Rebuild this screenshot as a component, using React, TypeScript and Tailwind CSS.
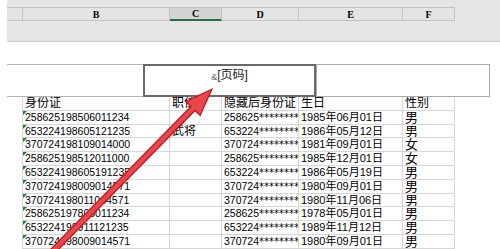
import React from 'react';

const rows = [
  ['258625198506011234', '', '258625', '1985年06月01日', '男'],
  ['653224198605121235', '武将', '653224', '1986年05月12日', '男'],
  ['370724198109014000', '', '370724', '1981年09月01日', '女'],
  ['258625198512011000', '', '258625', '1985年12月01日', '女'],
  ['653224198605191235', '', '653224', '1986年05月19日', '男'],
  ['370724198009014571', '', '370724', '1980年09月01日', '男'],
  ['370724198011064571', '', '370724', '1980年11月06日', '男'],
  ['258625197805011234', '', '258625', '1978年05月01日', '男'],
  ['653224198911121235', '', '653224', '1989年11月12日', '男'],
  ['370724198009014571', '', '370724', '1980年09月01日', '男'],
];

const cols = [
  { name: '', w: 'w-[16px]' },
  { name: 'B', w: 'w-[147px]' },
  { name: 'C', w: 'w-[52px]' },
  { name: 'D', w: 'w-[77px]' },
  { name: 'E', w: 'w-[104px]' },
  { name: 'F', w: 'w-[52px]' },
];

const cell = 'h-full border-r border-[#d6d6d6] overflow-hidden whitespace-nowrap pl-[2px]';

const App: React.FC = () => {
  return (
    <div className="relative w-[500px] h-[249px] overflow-hidden bg-white text-black font-['Liberation_Sans','Noto_Sans_CJK_SC',sans-serif]">
      {/* column header band */}
      <div className="ml-[7px] h-[42px] bg-[#e6e6e6] border-b border-[#cdcdcd] pt-[7px]">
        <div className="flex h-[14px]">
          {cols.map((c) => (
            <div
              key={c.name || 'corner'}
              className={`${c.w} h-full flex items-center justify-center border-t border-b border-r border-[#c2c2c2] text-[10px] font-bold font-['Liberation_Serif',serif] ${
                c.name === 'C' ? 'bg-[#d4d4d4] border-b-2 border-b-[#217346]' : 'bg-[#e4e4e4]'
              }`}
            >
              {c.name}
            </div>
          ))}
        </div>
      </div>

      <div className="h-[22px]" />

      {/* page header area */}
      <div className="ml-[7px] w-[483px] h-[33px] flex border-t border-b border-[#b4b4b4]">
        <div className="w-[136px]" />
        <div className="w-[173px] -mt-px -mb-px border-2 border-[#6a6a6a] flex justify-center pt-[2px] text-[12px] leading-[14px] text-[#222]">
          <span className="text-[9px] text-[#666] mt-[2px]">&amp;</span>[页码]
        </div>
        <div className="flex-1 -mt-px -mb-px border border-[#a8a8a8]" />
      </div>

      {/* sheet grid */}
      <div className="ml-[7px] flex flex-col">
        <div className="flex h-[13.8px] leading-[13.8px] text-[12px]">
          <div className="w-[16px] h-full border-r border-[#d6d6d6]" />
          <div className={`w-[147px] ${cell} border-b`}>身份证</div>
          <div className={`w-[52px] ${cell} border-b`}>职位</div>
          <div className={`w-[77px] ${cell} border-b`}>隐藏后身份证</div>
          <div className={`w-[104px] ${cell} border-b`}>生日</div>
          <div className={`w-[52px] ${cell} border-b`}>性别</div>
        </div>
        {rows.map((r, i) => (
          <div key={i} className="flex h-[13.8px] leading-[13.8px]">
            <div className="w-[16px] h-full border-r border-[#d6d6d6]" />
            <div className={`relative w-[147px] ${cell} border-b text-[10.5px]`}>
              <span className="absolute left-0 top-0 w-0 h-0 border-t-[4px] border-r-[4px] border-t-[#1f7a3a] border-r-transparent" />
              {r[0]}
            </div>
            <div className={`w-[52px] ${cell} border-b text-[12px]`}>{r[1]}</div>
            <div className={`w-[77px] ${cell} border-b text-[10.5px]`}>
              {r[2]}
              <span className="font-['DejaVu_Sans',sans-serif] text-[10px]">********</span>
            </div>
            <div className={`w-[104px] ${cell} border-b text-[11px]`}>{r[3]}</div>
            <div className={`w-[52px] ${cell} border-b text-[13px] pl-[1px]`}>{r[4]}</div>
          </div>
        ))}
      </div>

      {/* red arrow annotation */}
      <svg className="absolute inset-0 pointer-events-none" width="500" height="249" viewBox="0 0 500 249">
        <g transform="translate(50,254) rotate(-45.5)">
          <polygon
            points="0,-2.8 204,-2.8 204,-10 231,0 204,10 204,2.8 0,2.8"
            fill="#e8484c"
            stroke="#c0121a"
            strokeWidth="1.2"
            strokeLinejoin="miter"
          />
        </g>
      </svg>
    </div>
  );
};

export default App;
